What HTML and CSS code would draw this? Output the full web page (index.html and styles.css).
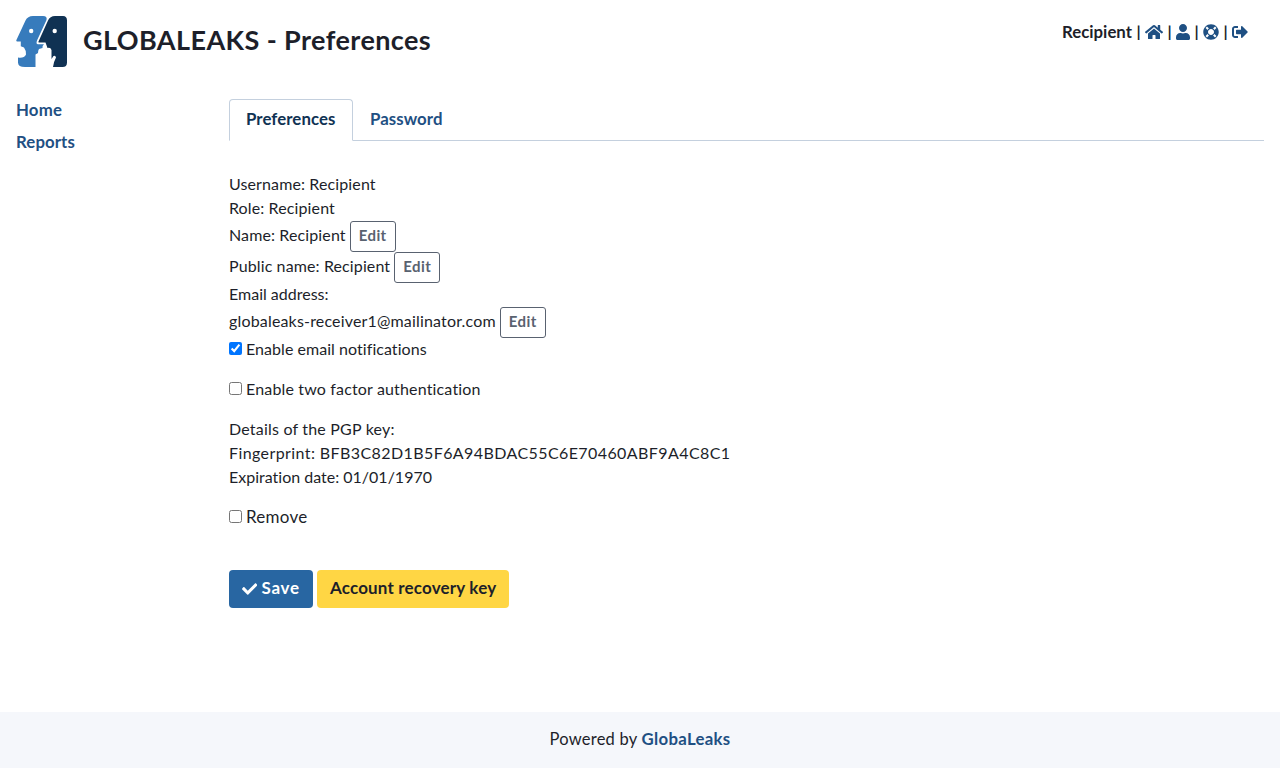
FILE: index.html
```html
<!DOCTYPE html>
<html lang="en">
<head>
<meta charset="utf-8">
<title>GLOBALEAKS - Preferences</title>
<link rel="stylesheet" href="styles.css">
</head>
<body>
<header class="header">
  <svg class="logo" viewBox="0 0 51 51">
    <path fill="#377bbc" d="M.3 24.300 9.500 4.500Q11.600 0 17 0H27Q31.500 0 30.500 4L21 24.500Q19.700 28.300 22 28.300H28Q26 30 26.500 32L23 33Q22 34.500 22 37L19.500 38.500V51H9Q2 51 2 46.500V41.500Q8 42.500 10 38.500 10.500 35 8 31.500L4.800 30.300V25.500H1Q0 25.300.3 24.300Z"/>
    <path fill="#103253" d="M22.500 25.500 32 4.500Q34 0 39 0H47Q51 0 51 4.500V46.500Q51 51 46.500 51H37Q38 45 40 41.500 39.500 39 37.500 40L35.500 43V34Q34.500 31 31.500 32L29.500 26.500H23Q22 26.500 22.500 25.500Z"/>
    <circle cx="15.200" cy="15" r="2.200" fill="#fff"/><circle cx="38.700" cy="15" r="2.200" fill="#fff"/>
  </svg>
  <h1 class="title">GLOBALEAKS - Preferences</h1>
  <div class="user-bar">
    <span class="user-name">Recipient</span><span class="sep">|</span>
    <svg class="icon icon-home" viewBox="0 0 576 512"><path d="M280.370 148.260L96 300.110V464a16 16 0 0 0 16 16l112.060-.29a16 16 0 0 0 15.920-16V368a16 16 0 0 1 16-16h64a16 16 0 0 1 16 16v95.640a16 16 0 0 0 16 16.050L464 480a16 16 0 0 0 16-16V300L295.670 148.260a12.190 12.190 0 0 0-15.300 0zM571.600 251.470L488 182.560V44.050a12 12 0 0 0-12-12h-56a12 12 0 0 0-12 12v72.610L318.470 43a48 48 0 0 0-61 0L4.340 251.470a12 12 0 0 0-1.600 16.900l25.500 31A12 12 0 0 0 45.150 301l235.220-193.740a12.190 12.190 0 0 1 15.300 0L530.900 301a12 12 0 0 0 16.900-1.600l25.500-31a12 12 0 0 0-1.700-16.930z"/></svg>
    <span class="sep">|</span>
    <svg class="icon icon-user" viewBox="0 0 448 512"><path d="M224 256c70.700 0 128-57.300 128-128S294.700 0 224 0 96 57.300 96 128s57.300 128 128 128zm89.600 32h-16.700c-22.200 10.200-46.900 16-72.900 16s-50.600-5.800-72.900-16h-16.700C60.200 288 0 348.200 0 422.400V464c0 26.500 21.500 48 48 48h352c26.500 0 48-21.500 48-48v-41.600c0-74.200-60.200-134.400-134.400-134.400z"/></svg>
    <span class="sep">|</span>
    <svg class="icon" viewBox="0 0 512 512"><path d="M256 8C119.033 8 8 119.033 8 256s111.033 248 248 248 248-111.033 248-248S392.967 8 256 8zm173.696 119.559l-63.399 63.399c-10.987-18.559-26.670-34.252-45.255-45.255l63.399-63.399a218.396 218.396 0 0 1 45.255 45.255zM256 352c-53.019 0-96-42.981-96-96s42.981-96 96-96 96 42.981 96 96-42.981 96-96 96zM127.559 82.304l63.399 63.399c-18.559 10.987-34.252 26.670-45.255 45.255l-63.399-63.399a218.372 218.372 0 0 1 45.255-45.255zM82.304 384.441l63.399-63.399c10.987 18.559 26.670 34.252 45.255 45.255l-63.399 63.399a218.396 218.396 0 0 1-45.255-45.255zm302.137 45.255l-63.399-63.399c18.559-10.987 34.252-26.670 45.255-45.255l63.399 63.399a218.403 218.403 0 0 1-45.255 45.255z"/></svg>
    <span class="sep">|</span>
    <svg class="icon" viewBox="0 0 512 512"><path d="M497 273L329 441c-15 15-41 4.500-41-17v-96H152c-13.300 0-24-10.700-24-24v-96c0-13.300 10.700-24 24-24h136V88c0-21.400 25.900-32 41-17l168 168c9.300 9.400 9.300 24.600 0 34zM192 436v-40c0-6.600-5.400-12-12-12H96c-17.700 0-32-14.300-32-32V160c0-17.700 14.300-32 32-32h84c6.600 0 12-5.400 12-12V76c0-6.600-5.400-12-12-12H96c-53 0-96 43-96 96v192c0 53 43 96 96 96h84c6.600 0 12-5.400 12-12z"/></svg>
  </div>
</header>
<div class="body">
  <nav class="sidebar"><a class="side-home">Home</a><a class="side-reports">Reports</a></nav>
  <main class="content">
    <div class="tabs"><a class="tab active">Preferences</a><a class="tab tab-password">Password</a></div>
    <div class="details">
      <div class="row"><span class="t-username">Username: Recipient</span></div>
      <div class="row"><span class="t-role">Role: Recipient</span></div>
      <div class="row tall"><span class="t-name">Name: Recipient</span><button class="edit">Edit</button></div>
      <div class="row tall"><span class="t-public">Public name: Recipient</span><button class="edit">Edit</button></div>
      <div class="row"><span class="t-email">Email address:</span></div>
      <div class="row tall"><span class="t-mail">globaleaks-receiver1@mailinator.com</span><button class="edit">Edit</button></div>
      <label class="row"><input type="checkbox" checked><span class="t-notif">Enable email notifications</span></label>
      <label class="row spaced"><input type="checkbox"><span class="t-2fa">Enable two factor authentication</span></label>
      <div class="row spaced"><span class="t-pgp">Details of the PGP key:</span></div>
      <div class="row"><span class="t-finger">Fingerprint: BFB3C82D1B5F6A94BDAC55C6E70460ABF9A4C8C1</span></div>
      <div class="row"><span class="t-exp">Expiration date: 01/01/1970</span></div>
      <label class="row spaced"><input type="checkbox"><span class="t-remove">Remove</span></label>
    </div>
    <div class="actions">
      <button class="btn save"><svg class="check" viewBox="0 0 512 512"><path d="M173.898 439.404l-166.400-166.400c-9.997-9.997-9.997-26.206 0-36.204l36.203-36.204c9.997-9.998 26.207-9.998 36.204 0L192 312.690 432.095 72.596c9.997-9.997 26.207-9.997 36.204 0l36.203 36.204c9.997 9.997 9.997 26.206 0 36.204l-294.400 294.401c-9.998 9.997-26.207 9.997-36.204-.001z"/></svg><span class="t-save">Save</span></button>
      <button class="btn recovery"><span class="t-recovery">Account recovery key</span></button>
    </div>
  </main>
</div>
<footer class="footer"><span class="t-powered">Powered by</span><a class="t-brand">GlobaLeaks</a></footer>
</body>
</html>
```
FILE: styles.css
```css
* { box-sizing: border-box; }
body {
  margin: 0;
  height: 768px;
  display: flex;
  flex-direction: column;
  background: #fff;
  color: #1d1f2a;
  font: 400 16px/24px Lato, "Liberation Sans", sans-serif;
  white-space: nowrap;
}
a { color: #1f5083; font-size: 16.8px; font-weight: 700; }
button { font-family: inherit; font-weight: 700; }
.header { display: flex; height: 83px; padding: 16px 32px 0 16px; }
.logo { width: 51px; height: 51px; }
.title { margin: 8px 0 0 16px; font-size: 27px; line-height: 32px; font-weight: 700; letter-spacing: .41px; }
.user-bar { display: flex; gap: 4px; height: 32px; margin-left: auto; align-items: center; font-weight: 700; }
.user-name { font-size: 16.8px; letter-spacing: .02px; }
.sep { width: 5px; text-align: center; padding-bottom: 2px; }
.icon { width: 16px; height: 16px; fill: #1f5083; }
.icon-home { width: 18px; }
.icon-user { width: 14px; }
.body { display: flex; flex: 1; }
.sidebar { display: flex; flex-direction: column; gap: 8px; width: 229px; padding: 15px 16px; }
.side-home { letter-spacing: .2px; }
.side-reports { letter-spacing: .1px; }
.content { flex: 1; padding: 16px 16px 0 0; }
.tabs { display: flex; height: 42px; border-bottom: 1px solid #c4d0de; }
.tab { height: 42px; padding: 7px 16px; border: 1px solid transparent; letter-spacing: .08px; }
.tab.active { width: 124px; color: #103253; background: #fff; border-color: #c4d0de #c4d0de #fff; border-radius: 4px 4px 0 0; }
.details { padding-top: 32px; }
.row { display: flex; align-items: center; gap: 4px; height: 24px; }
.row span, .footer span, .footer a, .btn span { padding-bottom: 2px; }
.row.tall { height: 31px; }
.row.tall span { padding-bottom: 3px; }
.row.spaced { margin-top: 16px; }
.edit { width: 46px; height: 31px; padding: 0 0 4px; border: 1px solid #596270; border-radius: 3px; background: #fff; color: #596270; font-size: 15px; letter-spacing: .4px; }
.t-username, .t-role, .t-name, .t-public { letter-spacing: .12px; }
.t-mail { letter-spacing: .17px; }
.t-notif { letter-spacing: .05px; }
.t-2fa { letter-spacing: .16px; }
.t-pgp { letter-spacing: .2px; }
.t-finger { letter-spacing: .41px; }
.t-exp { letter-spacing: 0; font-variant-ligatures: none; }
.t-remove { font-size: 17px; letter-spacing: .25px; }
.t-save { font-size: 17px; letter-spacing: .8px; }
.t-recovery { font-size: 17px; letter-spacing: .17px; }
.t-powered { font-size: 16.500px; letter-spacing: .25px; }
.t-brand { letter-spacing: .3px; }
input { width: 13px; height: 13px; margin: 0 0 3px; }
.actions { display: flex; gap: 4px; margin-top: 40px; }
.btn { display: flex; align-items: center; gap: 4px; height: 38px; padding: 0 13px; border: 0; border-radius: 4px; font-size: 16px; line-height: 24px; }
.save { width: 84px; background: #2866a2; color: #fff; }
.recovery { width: 192px; background: #ffd644; color: #1d1f2a; }
.check { width: 16px; height: 16px; fill: #fff; }
.footer { display: flex; gap: 4px; height: 56px; align-items: center; justify-content: center; background: #f5f7fb; }
```
